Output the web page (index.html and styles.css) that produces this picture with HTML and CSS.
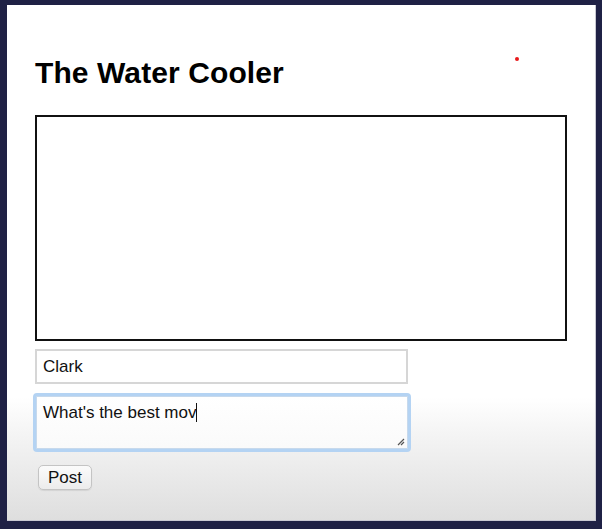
FILE: index.html
```html
<!DOCTYPE html>
<html>
<head>
<meta charset="utf-8">
<link rel="stylesheet" href="styles.css">
</head>
<body>
<div class="screen">
  <span class="dot"></span>
  <h1 class="title">The Water Cooler</h1>
  <div class="messages"></div>
  <div class="name-input">Clark</div>
  <div class="msg-area">
    <div class="msg-inner">What's the best mov<span class="caret"></span></div>
    <svg class="grip" width="9" height="9" viewBox="0 0 9 9"><path d="M8 2 L2 8 M8 5 L5 8" stroke="#555" stroke-width="1.2" fill="none"/></svg>
  </div>
  <button class="post">Post</button>
</div>
</body>
</html>
```
FILE: styles.css
```css
html, body { margin: 0; padding: 0; }
body {
  background: #1f2145;
  width: 602px;
  height: 529px;
  overflow: hidden;
  font-family: "Liberation Sans", Arial, Helvetica, sans-serif;
}
.screen {
  position: relative;
  margin: 5px 6px 0 7px;
  height: 516px;
  box-sizing: border-box;
  background: linear-gradient(to bottom, #ffffff 0px, #ffffff 392px, #f4f4f4 430px, #dedede 516px);
  border-right: 1px solid #c9c9d2;
  border-bottom: 1px solid #c9c9d2;
  padding: 50px 0 0 28px;
  display: flex;
  flex-direction: column;
  align-items: flex-start;
}
.dot {
  position: absolute;
  left: 508px;
  top: 52px;
  width: 4px;
  height: 4px;
  border-radius: 50%;
  background: #e8191b;
}
.title {
  margin: 0;
  font-size: 30px;
  font-weight: bold;
  color: #000;
  line-height: 36px;
  letter-spacing: 0.1px;
}
.messages {
  margin-top: 24px;
  width: 532px;
  height: 226px;
  box-sizing: border-box;
  border: 2px solid #111;
  background: #fff;
}
.name-input {
  margin-top: 8px;
  width: 373px;
  height: 35px;
  box-sizing: border-box;
  border: 2px solid #d6d6d6;
  background: #fff;
  font-size: 17px;
  line-height: 31px;
  padding-left: 6px;
  color: #111;
}
.msg-area {
  position: relative;
  margin-top: 9px;
  margin-left: -2px;
  width: 378px;
  height: 59px;
  box-sizing: border-box;
  border: 3px solid #b4d3f3;
  border-radius: 4px;
  background: #a9cbee;
  padding: 0;
}
.msg-inner {
  width: 100%;
  height: 100%;
  box-sizing: border-box;
  border: 1px solid #c7d9ec;
  background: linear-gradient(to bottom, #ffffff 0%, #fafafa 100%);
  font-size: 17px;
  line-height: 20px;
  padding: 6px 0 0 6px;
  color: #111;
}
.caret {
  display: inline-block;
  width: 1px;
  height: 19px;
  background: #111;
  vertical-align: -4px;
}
.grip {
  position: absolute;
  right: 3px;
  bottom: 3px;
}
.post {
  margin-top: 13px;
  margin-left: 3px;
  width: 54px;
  height: 25px;
  border: 1px solid #c4c4c4;
  border-radius: 5px;
  background: linear-gradient(to bottom, #fbfbfb, #ececec);
  font-family: "Liberation Sans", Arial, Helvetica, sans-serif;
  font-size: 17px;
  color: #111;
  padding: 0;
  box-shadow: 0 1px 1px rgba(0,0,0,0.08);
}
```
